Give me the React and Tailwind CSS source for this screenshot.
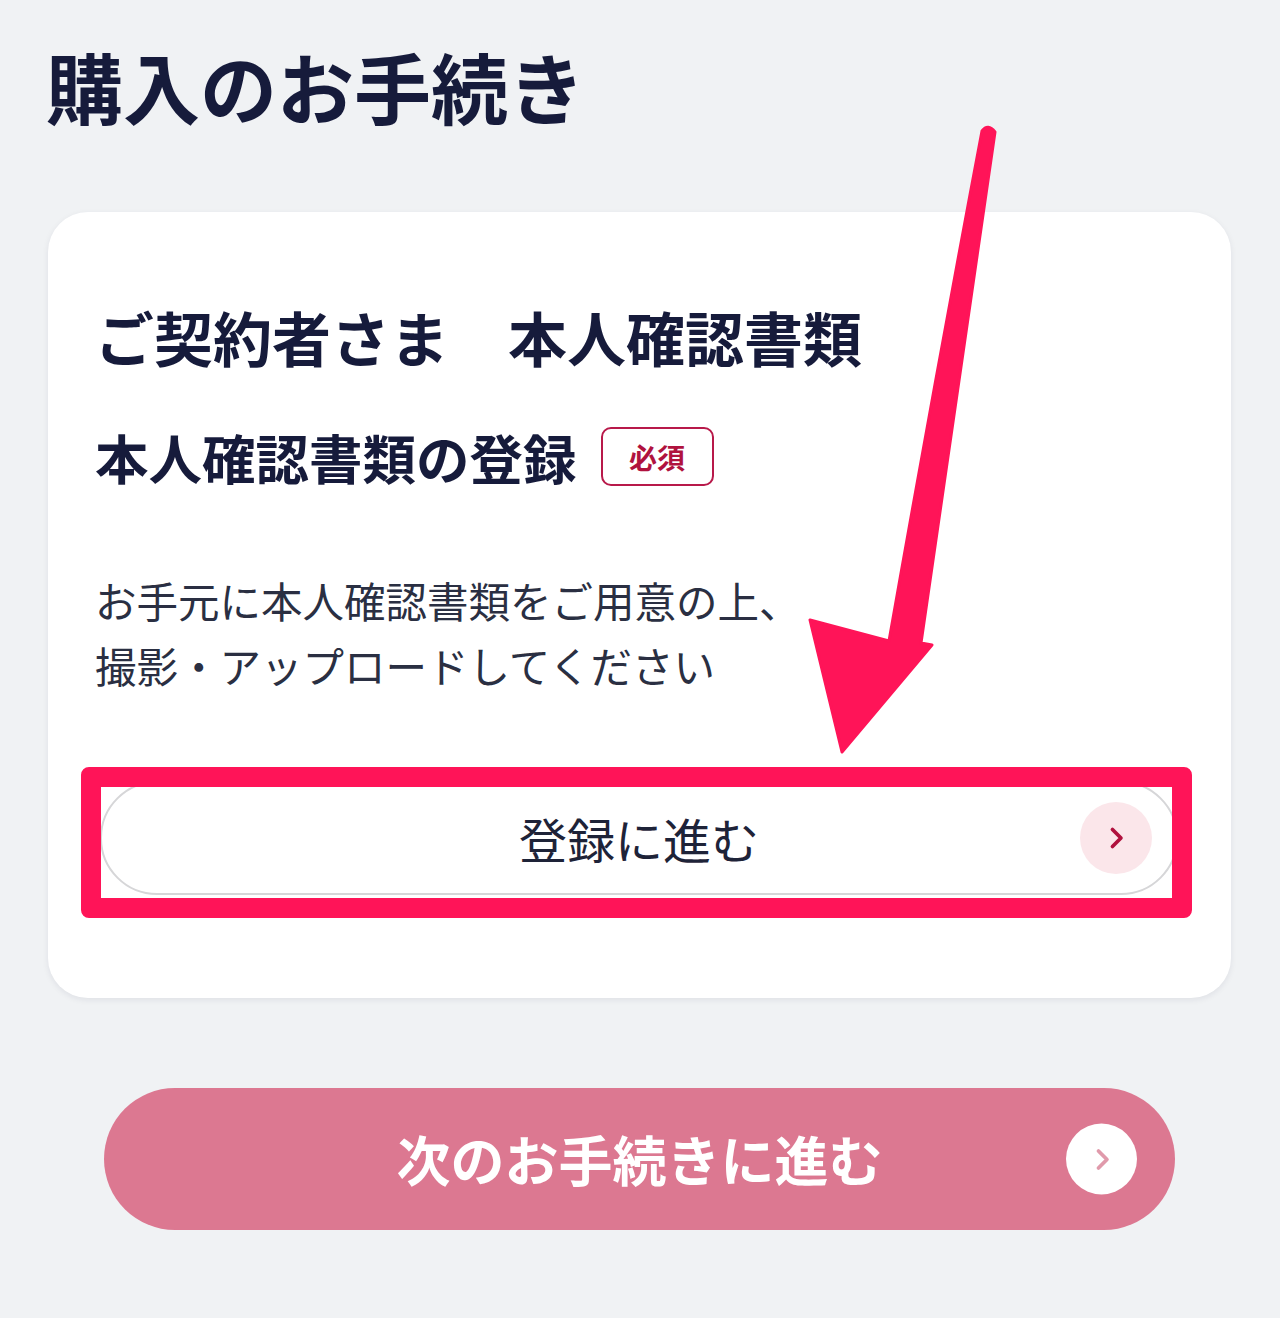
import React from 'react';

const jp = { fontFamily: '"Noto Sans CJK JP", "Noto Sans", sans-serif' };

const Chevron = ({ className }) => (
  <svg viewBox="0 0 24 24" className={className} fill="none" stroke="currentColor" strokeWidth="2.6" strokeLinecap="round" strokeLinejoin="round">
    <path d="M9.5 6l6 6-6 6" />
  </svg>
);

export default function App() {
  return (
    <div className="relative w-[1280px] h-[1318px] bg-[#f0f2f4] overflow-hidden text-[#161b3b]" style={jp}>
      <h1 className="pl-[46px] pt-[47px] text-[77px] leading-none font-bold">購入のお手続き</h1>

      <div className="mt-[88px] ml-[48px] mr-[49px] bg-white rounded-[40px] shadow-[0_2px_6px_rgba(20,30,60,0.08)] pl-[47px] pr-[53px] pt-[95px] pb-[103px]">
        <h2 className="text-[59px] leading-none font-bold">ご契約者さま　本人確認書類</h2>
        <div className="mt-[61px] flex items-center gap-[24px]">
          <h3 className="text-[53.5px] leading-none font-bold">本人確認書類の登録</h3>
          <span className="w-[113px] h-[59px] flex items-center justify-center rounded-[10px] border-[2.5px] border-[#b8194a] text-[#b0123e] text-[28px] font-bold leading-none">必須</span>
        </div>
        <p className="mt-[82px] text-[41.5px] leading-[65px] text-[#2a2f42]">
          お手元に本人確認書類をご用意の上、<br />撮影・アップロードしてください
        </p>
        <div className="pl-[5px]">
          <button className="mt-[83px] relative w-full h-[114px] rounded-full bg-white border-[2px] border-[#d6d6d8] flex items-center justify-center">
            <span className="text-[48px] leading-none text-[#1e2338]">登録に進む</span>
            <span className="absolute right-[24px] top-1/2 -translate-y-1/2 w-[72px] h-[72px] rounded-full bg-[#fbe6ea] flex items-center justify-center text-[#b0123e]">
              <Chevron className="w-[34px] h-[34px]" />
            </span>
          </button>
        </div>
      </div>

      <button className="mt-[90px] ml-[104px] w-[1071px] h-[142px] rounded-full bg-[#dc7891] relative flex items-center justify-center">
        <span className="text-[54px] leading-none font-bold text-white">次のお手続きに進む</span>
        <span className="absolute right-[38px] top-1/2 -translate-y-1/2 w-[71px] h-[71px] rounded-full bg-white flex items-center justify-center text-[#e09aab]">
          <Chevron className="w-[34px] h-[34px]" />
        </span>
      </button>

      {/* annotation highlight */}
      <div className="absolute left-[81px] top-[767px] w-[1111px] h-[151px] border-[20px] border-[#ff1458] rounded-[8px] pointer-events-none" />

      <svg className="absolute inset-0 pointer-events-none" width="1280" height="1318" viewBox="0 0 1280 1318">
        <path
          d="M982 131 Q988 123 995 132 Q960 380 921 643 L932 645 L842 752 L810 620 L889 641 Q935 380 982 131 Z"
          fill="#ff1458"
          stroke="#ff1458"
          strokeWidth="3"
          strokeLinejoin="round"
        />
      </svg>
    </div>
  );
}
